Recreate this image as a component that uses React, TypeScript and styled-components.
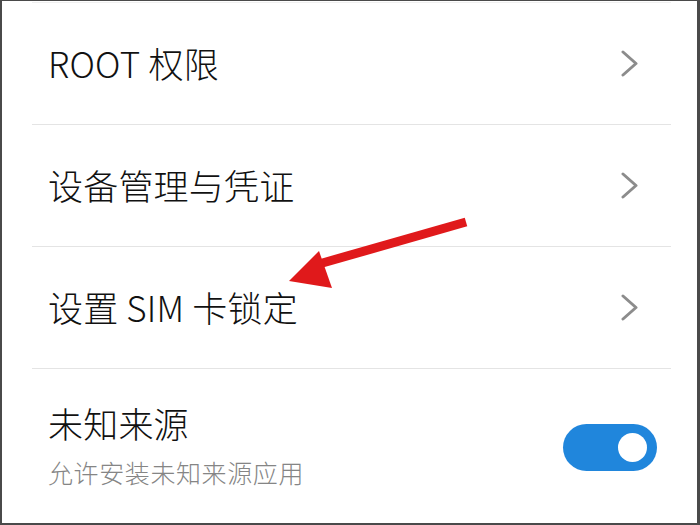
import React from "react";
import styled, { createGlobalStyle } from "styled-components";

const Global = createGlobalStyle`
  html, body { margin: 0; padding: 0; background: #fff; }
  * { box-sizing: border-box; }
`;

const Frame = styled.div`
  position: relative;
  width: 700px;
  height: 525px;
  border-style: solid;
  border-color: #4a4a4a;
  border-width: 1px 3px 2px 2px;
  background: #fff;
  overflow: hidden;
  font-family: "Noto Sans CJK SC", "Noto Sans", sans-serif;
  display: flex;
  flex-direction: column;
`;

const TopRule = styled.div`
  height: 1px;
  margin: 1px 26px 0 30px;
  background: #f0f0f0;
`;

const Item = styled.div<{ $tall?: boolean; $last?: boolean }>`
  height: ${(p) => (p.$tall ? "auto" : "122px")};
  flex: ${(p) => (p.$tall ? "1" : "none")};
  margin: 0 26px 0 30px;
  padding: 0 32px 0 16px;
  display: flex;
  align-items: center;
  justify-content: space-between;
  border-bottom: ${(p) => (p.$last ? "none" : "1px solid #e4e4e4")};
`;

const TextCol = styled.div`
  display: flex;
  flex-direction: column;
  gap: 14px;
`;

const Title = styled.div`
  font-size: 35px;
  font-weight: 300;
  line-height: 40px;
  color: #111;
  letter-spacing: 0.2px;
  margin-top: -2px;
`;

const Sub = styled.div`
  font-size: 25px;
  font-weight: 300;
  line-height: 30px;
  color: #858585;
  letter-spacing: 0.6px;
`;

const Chevron = styled.svg`
  width: 18px;
  height: 27px;
  flex: none;
`;

const Toggle = styled.div`
  width: 94px;
  height: 47px;
  border-radius: 24px;
  background: #2086dc;
  margin-right: -18px;
  margin-top: 2px;
  display: flex;
  align-items: center;
  justify-content: flex-end;
  padding-right: 10px;
`;

const Knob = styled.div`
  width: 29px;
  height: 29px;
  border-radius: 50%;
  background: #fff;
`;

const ArrowLayer = styled.svg`
  position: absolute;
  left: 0;
  top: 0;
  width: 700px;
  height: 525px;
  pointer-events: none;
`;

const ChevronIcon = () => (
  <Chevron viewBox="0 0 18 27">
    <path d="M2 2 L15 13.5 L2 25" fill="none" stroke="#8c8c8c" strokeWidth="3" strokeLinecap="round" strokeLinejoin="round" />
  </Chevron>
);

export default function App() {
  return (
    <>
      <Global />
      <Frame>
        <TopRule />
        <Item>
          <Title>ROOT 权限</Title>
          <ChevronIcon />
        </Item>
        <Item>
          <Title>设备管理与凭证</Title>
          <ChevronIcon />
        </Item>
        <Item>
          <Title>设置 SIM 卡锁定</Title>
          <ChevronIcon />
        </Item>
        <Item $tall $last>
          <TextCol>
            <Title>未知来源</Title>
            <Sub>允许安装未知来源应用</Sub>
          </TextCol>
          <Toggle>
            <Knob />
          </Toggle>
        </Item>
        <ArrowLayer viewBox="0 0 700 525">
          <line x1="464" y1="221" x2="310" y2="265" stroke="#e0191b" strokeWidth="9" />
          <polygon points="287,280 317,250 330,287" fill="#e0191b" />
        </ArrowLayer>
      </Frame>
    </>
  );
}
